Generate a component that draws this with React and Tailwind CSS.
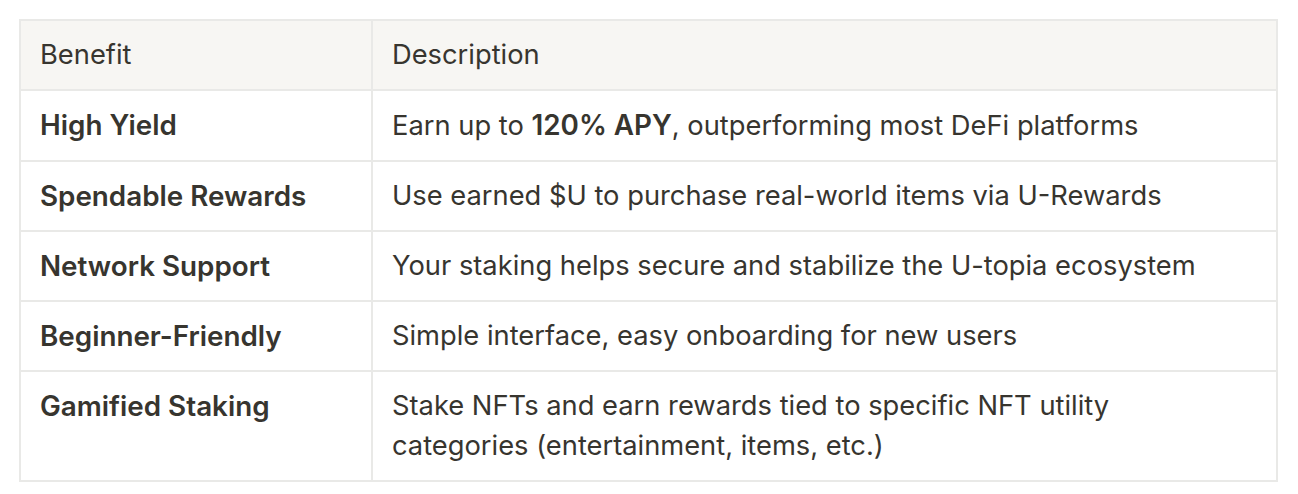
export default function App() {
  const rows = [
    ["High Yield", <>Earn up to <b className="font-semibold text-[27.8px]">120% APY</b>, outperforming most DeFi platforms</>],
    ["Spendable Rewards", "Use earned $U to purchase real-world items via U-Rewards"],
    ["Network Support", "Your staking helps secure and stabilize the U-topia ecosystem"],
    ["Beginner-Friendly", "Simple interface, easy onboarding for new users"],
    ["Gamified Staking", <>Stake NFTs and earn rewards tied to specific NFT utility<br />categories (entertainment, items, etc.)</>],
  ];
  return (
    <div className="w-[1298px] h-[494px] bg-white pt-[19px] pl-[19px]" style={{ fontFamily: 'Inter, "Noto Sans", sans-serif' }}>
      <div className="w-[1259px] border-2 border-[#e9e9e7] text-[#37352f] text-[27.3px] leading-[40px]">
        <div className="flex bg-[#f7f6f3]">
          <div className="w-[352px] shrink-0 border-r-2 border-[#e9e9e7] px-[19px] py-[14px]">Benefit</div>
          <div className="flex-1 px-[19px] py-[14px]">Description</div>
        </div>
        {rows.map(([a, b], i) => (
          <div key={i} className="flex border-t-2 border-[#e9e9e7]">
            <div className="w-[352px] shrink-0 border-r-2 border-[#e9e9e7] px-[19px] py-[14px] font-semibold text-[27.8px]">{a}</div>
            <div className="flex-1 px-[19px] py-[14px]">{b}</div>
          </div>
        ))}
      </div>
    </div>
  );
}
